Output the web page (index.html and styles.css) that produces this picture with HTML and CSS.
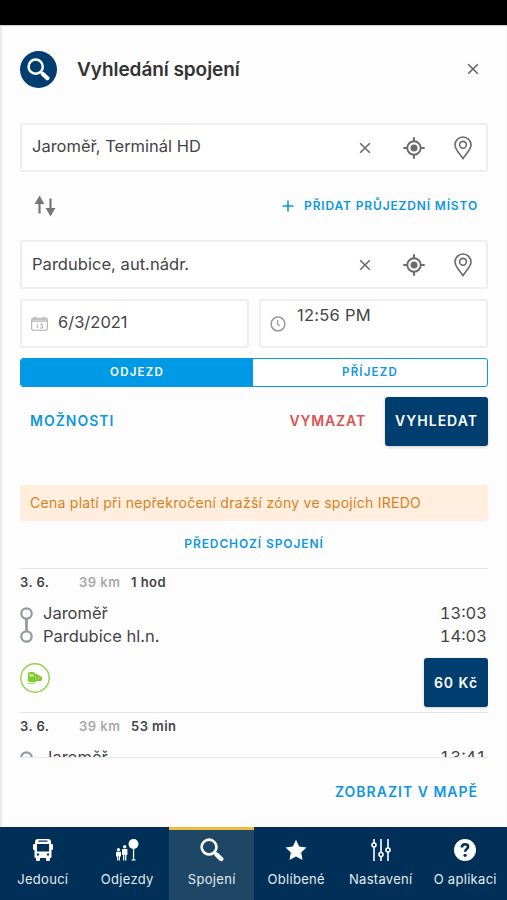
FILE: index.html
```html
<!DOCTYPE html>
<html lang="cs">
<head>
<meta charset="utf-8">
<title>Vyhledání spojení</title>
<link rel="stylesheet" href="styles.css">
</head>
<body>
<svg class="defs" width="0" height="0">
  <symbol id="close" viewBox="0 0 12 12"><path d="M1.200 1.200 10.800 10.800M10.800 1.200 1.200 10.800" fill="none" stroke="currentColor" stroke-width="1.600"/></symbol>
  <symbol id="target" viewBox="0 0 22 22"><circle cx="11" cy="11" r="6.700" fill="none" stroke="currentColor" stroke-width="1.900"/><circle cx="11" cy="11" r="3.500" fill="currentColor"/><path d="M11 .3V5M11 17v4.700M.3 11H5M17 11h4.700" stroke="currentColor" stroke-width="2"/></symbol>
  <symbol id="pin" viewBox="0 0 18 24"><path d="M9 22.500C6.500 18.500 1 13.500 1 8.900A8 7.900 0 0 1 17 8.900C17 13.500 11.500 18.500 9 22.500Z" fill="none" stroke="currentColor" stroke-width="1.600"/><circle cx="9" cy="8.800" r="3.400" fill="none" stroke="currentColor" stroke-width="1.600"/></symbol>
  <symbol id="search" viewBox="0 0 22 22"><circle cx="8.300" cy="8.300" r="6.800" fill="none" stroke="currentColor" stroke-width="2.400"/><path d="M13 13l2 2" stroke="currentColor" stroke-width="2.400"/><path d="M15.200 15.200l4.300 4.100" stroke="currentColor" stroke-width="4" stroke-linecap="round"/></symbol>
</svg>
<div class="status"></div>
<main class="panel">
  <header class="header">
    <span class="logo"><svg width="23" height="23"><use href="#search"/></svg></span>
    <h1>Vyhledání spojení</h1>
    <svg class="close" width="12" height="12"><use href="#close"/></svg>
  </header>
  <div class="field from">
    <span class="value v-from">Jaroměř, Terminál HD</span>
    <svg width="12" height="12"><use href="#close"/></svg>
    <svg class="target" width="22" height="22"><use href="#target"/></svg>
    <svg class="pin" width="18" height="24"><use href="#pin"/></svg>
  </div>
  <div class="via">
    <svg width="22" height="22" viewBox="0 0 22 22"><path d="M5.500 18.500V5M16.500 3.500V17" stroke="#777" stroke-width="2.200"/><path d="M5.500 .5 10.400 9H.6ZM16.500 21.500 11.600 13h9.800Z" fill="#777"/></svg>
    <span class="link add"><svg width="12" height="12" viewBox="0 0 12 12"><path d="M6 .5v11M.5 6h11" stroke="currentColor" stroke-width="1.600"/></svg><span class="add-text">PŘIDAT PRŮJEZDNÍ MÍSTO</span></span>
  </div>
  <div class="field">
    <span class="value v-to">Pardubice, aut.nádr.</span>
    <svg width="12" height="12"><use href="#close"/></svg>
    <svg class="target" width="22" height="22"><use href="#target"/></svg>
    <svg class="pin" width="18" height="24"><use href="#pin"/></svg>
  </div>
  <div class="when">
    <div class="box">
      <svg width="17" height="15" viewBox="0 0 17 15" fill="none" stroke="#aaa"><rect x=".7" y="2.200" width="15.600" height="12" rx="1"/><path d="M.7 5.200h15.600M4 .5v3M13 .5v3M1 3.800h15"/><path d="M6.300 7.500v4.500M9 8h2.500l-1.300 1.800h1.300V12H9" stroke-width=".9"/></svg>
      <span class="value v-date">6/3/2021</span>
    </div>
    <div class="box">
      <svg width="16" height="16" viewBox="0 0 16 16" fill="none" stroke="#999"><circle cx="8" cy="8" r="6.900" stroke-width="1.500"/><path d="M7.600 4v4.500l2.300 1.200" stroke-width="1.200"/></svg>
      <span class="value v-time">12:56 PM</span>
    </div>
  </div>
  <div class="segment"><span class="on">ODJEZD</span><span>PŘÍJEZD</span></div>
  <div class="actions">
    <span class="link options">MOŽNOSTI</span>
    <span class="clear">VYMAZAT</span>
    <span class="button submit">VYHLEDAT</span>
  </div>
  <section class="results">
    <div class="notice"><span>Cena platí při nepřekročení dražší zóny ve spojích IREDO</span></div>
    <div class="link previous"><span>PŘEDCHOZÍ SPOJENÍ</span></div>
    <article class="trip">
      <div class="meta"><span class="date">3. 6.</span><span class="km">39 km</span><span class="dur">1 hod</span></div>
      <div class="stops">
        <svg width="13" height="36" viewBox="0 0 13 36" fill="none" stroke="#939a9f" stroke-width="2.200"><circle cx="6.500" cy="6.500" r="5.200"/><circle cx="6.500" cy="29.500" r="5.200"/><path d="M6.500 11.700v12.600" stroke-width="2.700"/></svg>
        <div class="names"><span class="s1">Jaroměř</span><span class="s2">Pardubice hl.n.</span></div>
        <div class="times"><span>13:03</span><span>14:03</span></div>
      </div>
      <div class="fare">
        <svg width="30" height="30" viewBox="0 0 30 30"><circle cx="15" cy="15" r="14.200" fill="#fff" stroke="#93d14b" stroke-width="1.400"/><path d="M7.800 11.300q.2-2.300 2.400-2.300h2.600q1.600 0 2.400 1.600l4.600 2.200q2.200.4 2.200 2.200v2.500l-3 .8-1.700-.4-2.200 1.400H9.500l-1.700-1.600Z" fill="#82c92f"/><path d="M9.300 11.300h4.400v2.200H9.300Z" fill="#d9efbf"/><path d="M15.500 12.800v4M18.500 13.800v3" stroke="#b9e28c" stroke-width=".7"/><path d="M7.500 20.600h7.500" stroke="#a5d96b"/></svg>
        <span class="button price">60 Kč</span>
      </div>
    </article>
    <article class="trip">
      <div class="meta"><span class="date">3. 6.</span><span class="km">39 km</span><span class="dur d2">53 min</span></div>
      <div class="stops">
        <svg width="13" height="36" viewBox="0 0 13 36" fill="none" stroke="#939a9f" stroke-width="2.200"><circle cx="6.500" cy="6.500" r="5.200"/></svg>
        <div class="names"><span class="s1">Jaroměř</span></div>
        <div class="times"><span>13:41</span></div>
      </div>
    </article>
  </section>
  <footer class="foot"><span class="link map">ZOBRAZIT V MAPĚ</span></footer>
</main>
<nav class="nav">
  <a><svg width="22" height="24" viewBox="0 0 22 24"><path fill="#fff" fill-rule="evenodd" d="M6 1h10q3 0 3 3v2h1q1 0 1 1v4q0 1-1 1h-.5v7q0 1-1 1H18v2q0 1-1 1h-2q-1 0-1-1v-2H8v2q0 1-1 1H5q-1 0-1-1v-2h-.5q-1 0-1-1v-7H2q-1 0-1-1V7q0-1 1-1h1V4q0-3 3-3Zm.5 1.600v1.200h9V2.600ZM5 6v7.500h12V6Zm1 9.300a1.200 1.200 0 1 0 .01 0Zm10 0a1.200 1.200 0 1 0 .01 0Z"/></svg><span class="n1">Jedoucí</span></a>
  <a><svg width="24" height="24" viewBox="0 0 24 24" fill="#fff"><circle cx="18.500" cy="6" r="5"/><path d="M17.900 10h1.300v11.500h1.500v1h-4.300v-1h1.500Z"/><circle cx="3.500" cy="11.700" r="1.600"/><circle cx="9.700" cy="8.700" r="1.700"/><path d="M1 13.800h5V18.500H5v4H3.800V18h-.6v4.500H2v-4H1ZM7 11h5.400v6h-1v5.500h-1.300v-6h-.8v6H8V17H7Z"/></svg><span class="n2">Odjezdy</span></a>
  <a class="active"><svg width="24" height="24" viewBox="0 0 22 22"><use href="#search"/></svg><span class="n3">Spojení</span></a>
  <a><svg width="24" height="24" viewBox="0 0 24 24"><path fill="#fff" d="m12 1.800 3.200 6.700 7.300 1-5.300 5.100 1.300 7.300L12 18.400l-6.500 3.500 1.300-7.300L1.500 9.500l7.300-1Z"/></svg><span class="n4">Oblíbené</span></a>
  <a><svg width="24" height="24" viewBox="0 0 24 24" fill="none" stroke="#fff" stroke-width="1.600"><path d="M5 1v4M5 9v14M12 1v13.500M12 18.500V23M19 1v9M19 14v9"/><circle cx="5" cy="7" r="2"/><circle cx="12" cy="16.500" r="2"/><circle cx="19" cy="12" r="2"/></svg><span class="n5">Nastavení</span></a>
  <a><svg width="24" height="24" viewBox="0 0 24 24"><circle cx="12" cy="12" r="11" fill="#fff"/><path d="M8.900 9.500c0-4.300 6.400-4 6.200-.7-.1 2-3 2.300-3 5" fill="none" stroke="#003057" stroke-width="2.600"/><circle cx="12.100" cy="17.300" r="1.600" fill="#003057"/></svg><span class="n6">O aplikaci</span></a>
</nav>
</body>
</html>
```
FILE: styles.css
```css
* { box-sizing: border-box; }
body {
  margin: 0;
  width: 507px;
  height: 900px;
  overflow: hidden;
  display: flex;
  flex-direction: column;
  background: #fdfdfd;
  color: #444;
  font-family: Inter, "Liberation Sans", sans-serif;
  font-size: 16px;
  white-space: nowrap;
}
svg { display: block; flex: none; }
.defs { position: absolute; }
.status { height: 25px; background: #000; flex: none; }
.panel {
  height: 802px;
  flex: none;
  padding: 0 19px 0 20px;
  display: flex;
  flex-direction: column;
  box-shadow: inset 3px 0 3px -2px #ddd, inset 0 1px 1px #ccc;
}
.header { height: 88px; display: flex; align-items: center; flex: none; margin-bottom: 10px; }
.logo {
  width: 37px;
  height: 37px;
  border-radius: 50%;
  background: #003e6f;
  color: #fff;
  display: grid;
  place-items: center;
}
h1 { margin: 0 0 0 20px; padding-top: 1px; font-size: 19px; font-weight: 600; letter-spacing: -.06px; color: #333; }
.close { margin: 0 9px 0 auto; color: #666; }
.field {
  height: 49px;
  flex: none;
  border: 2px solid #eee;
  border-radius: 3px;
  background: #fff;
  display: flex;
  align-items: center;
  padding: 0 14px 0 10px;
  color: #6b6b6b;
}
.value { font-size: 16.5px; color: #444; }
.field .value { margin-right: auto; padding-bottom: 2px; }
.from .value { padding-bottom: 4px; }
.v-to { letter-spacing: .04px; }
.v-time { letter-spacing: .25px; }
.target { margin-left: 32px; }
.pin { margin-left: 29px; }
.via { height: 68px; flex: none; display: flex; align-items: center; justify-content: space-between; padding: 0 10px 0 14px; }
.link { color: #1097dd; font-weight: 600; letter-spacing: 1px; }
.add { display: flex; align-items: center; gap: 10px; font-size: 12px; letter-spacing: .85px; padding-bottom: 1px; }
.when { display: grid; grid-template-columns: 229px 229px; gap: 10px; margin: 10px 0; }
.box {
  height: 49px;
  border: 2px solid #eee;
  border-radius: 3px;
  background: #fff;
  display: flex;
  align-items: center;
  padding: 0 9px;
}
.box .value { margin-left: 10px; padding-bottom: 3px; }
.box .v-time { padding-bottom: 17px; margin-left: 11px; }
.segment {
  height: 29px;
  flex: none;
  display: grid;
  grid-template-columns: 232px 1fr;
  border: 1px solid #0c98df;
  border-radius: 3px;
  overflow: hidden;
  background: #fff;
  color: #0c98df;
  font-size: 11.5px;
  font-weight: 600;
  letter-spacing: 1.2px;
  line-height: 27px;
  text-align: center;
}
.on { background: #0099e5; color: #fff; }
.actions { height: 49px; flex: none; display: flex; align-items: center; margin: 10px 0 39px; padding-left: 10px; font-size: 14px; }
.options { padding-bottom: 2px; }
.clear { color: #da5254; font-weight: 600; letter-spacing: .85px; margin: 0 19px 0 auto; padding-bottom: 2px; }
.button {
  background: #003e6f;
  color: #fff;
  height: 49px;
  border-radius: 3px;
  display: flex;
  align-items: center;
  justify-content: center;
  font-size: 14px;
  font-weight: 600;
  letter-spacing: 1px;
  padding-bottom: 2px;
  box-shadow: 0 1px 3px #0003;
}
.submit { width: 103px; }
.results { height: 273px; flex: none; overflow: hidden; border-bottom: 1px solid #e8e8e8; }
.notice { height: 36px; border-radius: 2px; background: #ffeedd; color: #d6821d; font-size: 14px; letter-spacing: .275px; line-height: 36px; padding-left: 10px; }
.previous { height: 47px; line-height: 46px; font-size: 12px; letter-spacing: .9px; text-align: center; }
.trip { height: 144px; border-top: 1px solid #e4e4e4; padding-top: 4px; }
.meta { display: flex; font-size: 13px; font-weight: 600; line-height: 18px; letter-spacing: .45px; }
.date { width: 59px; }
.km { width: 52px; color: #aaa; letter-spacing: .5px; }
.stops { display: flex; margin-top: 11px; font-size: 16.5px; line-height: 23px; }
.stops svg { margin-top: 5px; }
.names, .times { display: flex; flex-direction: column; align-items: flex-start; }
.names { margin-left: 10px; }
.times { margin-left: auto; padding-right: 1px; align-items: flex-end; font-variant-numeric: tabular-nums; }
.fare { display: flex; justify-content: space-between; margin-top: 10px; }
.fare svg { margin-top: 5px; }
.price { width: 64px; padding-bottom: 1px; }
.foot { height: 69px; display: flex; align-items: center; justify-content: flex-end; padding: 0 10px 2px 0; font-size: 14px; }
.nav { height: 73px; flex: none; background: #003057; display: grid; grid-template-columns: repeat(6, 1fr); }
.nav a { display: flex; flex-direction: column; align-items: center; padding: 11px 0 0 1px; gap: 7px; color: #e3ebf1; font-size: 13px; line-height: 20px; letter-spacing: .3px; border-top: 0 solid #eebb42; }
.nav svg { color: #fff; }
.nav .active { background: #1e4766; border-top-width: 3px; padding-top: 8px; }
```
